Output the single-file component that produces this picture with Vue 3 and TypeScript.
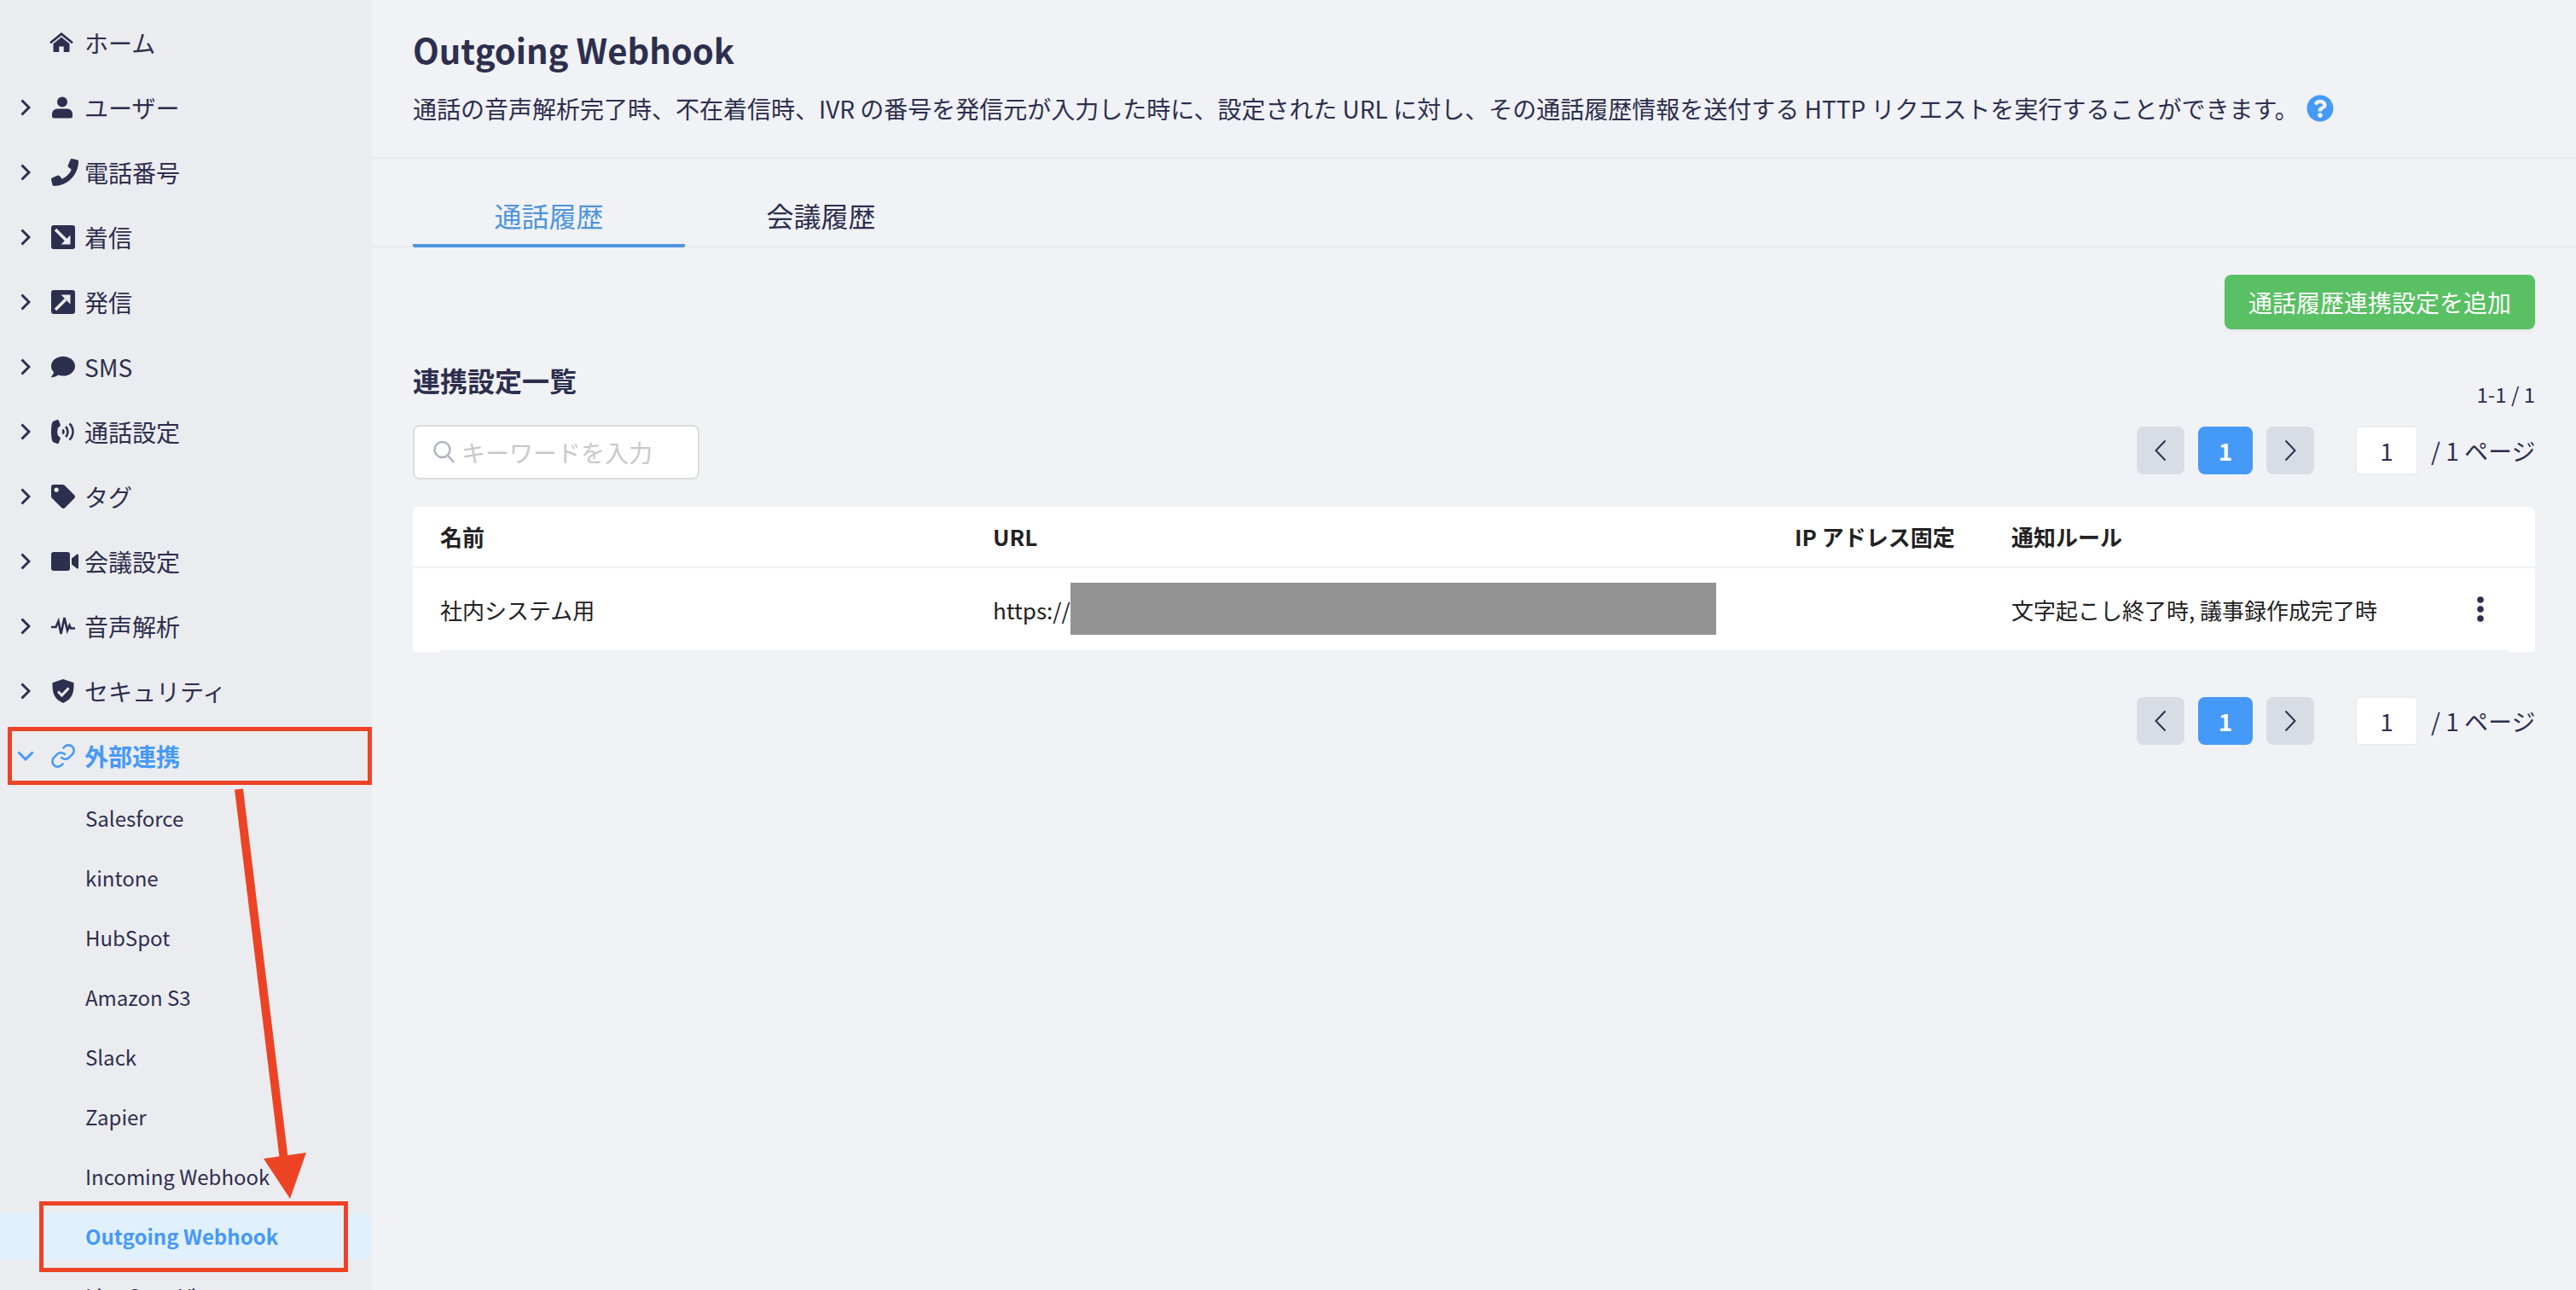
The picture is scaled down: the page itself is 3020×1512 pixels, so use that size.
<script setup lang="ts">
interface NavItem { label: string; icon: string; chevron?: boolean }
const navItems: NavItem[] = [
  { label: 'ホーム', icon: 'home' },
  { label: 'ユーザー', icon: 'user', chevron: true },
  { label: '電話番号', icon: 'phone', chevron: true },
  { label: '着信', icon: 'in', chevron: true },
  { label: '発信', icon: 'out', chevron: true },
  { label: 'SMS', icon: 'sms', chevron: true },
  { label: '通話設定', icon: 'call', chevron: true },
  { label: 'タグ', icon: 'tag', chevron: true },
  { label: '会議設定', icon: 'video', chevron: true },
  { label: '音声解析', icon: 'wave', chevron: true },
  { label: 'セキュリティ', icon: 'shield', chevron: true },
]
const subItems = ['Salesforce', 'kintone', 'HubSpot', 'Amazon S3', 'Slack', 'Zapier', 'Incoming Webhook']
</script>

<template>
  <div class="page">
    <aside class="side">
      <div v-for="item in navItems" :key="item.label" class="nav">
        <svg v-if="item.chevron" class="chev" viewBox="0 0 12 20"><path d="M1.500 1.500 10 10l-8.500 8.500" /></svg>
        <span v-else class="chev" />
        <span class="ico">
          <svg v-if="item.icon === 'home'" viewBox="0 0 28 24" class="i28 shift"><path d="M14 0 .2 11.200l1.700 2.100L14 3.400l12.100 9.900 1.700-2.100Z" /><path d="M14 5.600 4.500 13.300V22a1 1 0 0 0 1 1h5.800v-6.500h5.400V23h5.800a1 1 0 0 0 1-1v-8.700Z" /></svg>
          <svg v-else-if="item.icon === 'user'" viewBox="0 0 24 26" class="i24"><circle cx="12" cy="6.500" r="6" /><path d="M6 14.500h12a6 6 0 0 1 6 6V23a2.500 2.500 0 0 1-2.500 2.500h-19A2.500 2.500 0 0 1 0 23v-2.500a6 6 0 0 1 6-6Z" /></svg>
          <svg v-else-if="item.icon === 'phone'" viewBox="0 0 512 512" class="i32"><path d="M493.400 24.600l-104-24c-11.300-2.600-22.900 3.300-27.500 13.900l-48 112c-4.200 9.800-1.400 21.300 6.900 28l60.600 49.600c-36 76.700-98.900 140.500-177.200 177.200l-49.600-60.600c-6.800-8.300-18.200-11.100-28-6.900l-112 48C3.900 366.500-2 378.100.6 389.400l24 104C27.100 504.200 36.700 512 48 512c256.100 0 464-207.500 464-464 0-11.200-7.700-20.900-18.600-23.400z" /></svg>
          <svg v-else-if="item.icon === 'in'" viewBox="0 0 28 28" class="i28"><rect width="28" height="28" rx="3" /><path class="cut" d="M5 5 18 18" /><path class="cutfill" d="M22.500 11.500V22.500H11.500Z" /></svg>
          <svg v-else-if="item.icon === 'out'" viewBox="0 0 28 28" class="i28"><rect width="28" height="28" rx="3" /><path class="cut" d="M5 23 17 11" /><path class="cutfill" d="M11.500 5.500H22.500V16.500Z" /></svg>
          <svg v-else-if="item.icon === 'sms'" viewBox="0 0 512 512" class="i28"><path d="M256 32C114.600 32 0 125.100 0 240c0 49.600 21.400 95 57 130.700C44.500 421.100 2.700 466 2.200 466.500c-2.200 2.300-2.800 5.700-1.500 8.700S4.800 480 8 480c66.300 0 116-31.800 140.600-51.400 32.700 12.300 69 19.400 107.400 19.400 141.400 0 256-93.100 256-208S397.400 32 256 32z" /></svg>
          <svg v-else-if="item.icon === 'call'" viewBox="0 0 28 28" class="i28"><path d="M7 0 2.500 1.800C1 2.500 0 7 0 14s1 11.500 2.500 12.200L7 28c.8.200 1.500 0 1.800-.8l2-5c.2-.6 0-1.200-.5-1.600L8 18.500c-1-3-1-6 0-9l2.300-2.100c.5-.4.700-1 .5-1.600l-2-5C8.500 0 7.800-.2 7 0Z" /><g class="wave"><path d="M13.500 11.500a4 4 0 0 1 0 5" /><path d="M17 8a8.500 8.500 0 0 1 0 12" /><path d="M21.500 4.500a13.500 13.500 0 0 1 4 9.500 13.500 13.500 0 0 1-4 9.500" /></g></svg>
          <svg v-else-if="item.icon === 'tag'" viewBox="0 0 512 512" class="i28"><path d="M0 252.118V48C0 21.490 21.490 0 48 0h204.118a48 48 0 0 1 33.941 14.059l211.882 211.882c18.745 18.745 18.745 49.137 0 67.882L293.823 497.941c-18.745 18.745-49.137 18.745-67.882 0L14.059 286.059A48 48 0 0 1 0 252.118zM112 64c-26.510 0-48 21.490-48 48s21.490 48 48 48 48-21.490 48-48-21.490-48-48-48z" fill-rule="evenodd" /></svg>
          <svg v-else-if="item.icon === 'video'" viewBox="0 0 32 22" class="i32w"><rect width="22" height="22" rx="3" /><path d="M24 7.500 30 2.800c.8-.6 2-.1 2 1v14.400c0 1.100-1.200 1.600-2 1L24 14.500Z" /></svg>
          <svg v-else-if="item.icon === 'wave'" viewBox="0 0 28 24" class="i28 line"><path d="M0 13h5.500l3-7 3 15L15.500 2l3.500 15 2.500-6 1.500 3.500h5" /></svg>
          <svg v-else viewBox="0 0 28 28" class="i28"><path d="M14 0 1.500 4.300C1.300 16 3 23.500 14 28 25 23.500 26.700 16 26.500 4.300Z" /><path class="cut thin" d="m8 14.500 4.500 4.500 8-8.500" /></svg>
        </span>
        <span class="label">{{ item.label }}</span>
      </div>

      <div class="nav open">
        <svg class="chev-open" viewBox="0 0 20 12"><path d="M1.500 1.500 10 10l8.500-8.500" /></svg>
        <span class="ico">
          <svg viewBox="1 1 22 22" class="i28 link"><path d="M10 13a5 5 0 0 0 7.540.54l3-3a5 5 0 0 0-7.070-7.070l-1.720 1.710" /><path d="M14 11a5 5 0 0 0-7.540-.54l-3 3a5 5 0 0 0 7.070 7.070l1.710-1.710" /></svg>
        </span>
        <span class="label">外部連携</span>
      </div>

      <div class="subs">
        <div v-for="s in subItems" :key="s" class="sub">{{ s }}</div>
        <div class="sub active">Outgoing Webhook</div>
        <div class="sub">Live Sync Viewer</div>
      </div>
    </aside>

    <main class="main">
      <header class="head">
        <h1>Outgoing Webhook</h1>
        <p class="desc">
          <span>通話の音声解析完了時、不在着信時、IVR の番号を発信元が入力した時に、設定された URL に対し、その通話履歴情報を送付する HTTP リクエストを実行することができます。</span>
          <svg class="help" viewBox="0 0 512 512"><path d="M504 256c0 136.997-111.043 248-248 248S8 392.997 8 256C8 119.083 119.043 8 256 8s248 111.083 248 248zM262.655 90c-54.497 0-89.255 22.957-116.549 63.758-3.536 5.286-2.353 12.415 2.715 16.258l34.699 26.310c5.205 3.947 12.621 3.008 16.665-2.122 17.864-22.658 30.113-35.797 57.303-35.797 20.429 0 45.698 13.148 45.698 32.958 0 14.976-12.363 22.667-32.534 33.976C247.128 238.528 216 254.941 216 296v4c0 6.627 5.373 12 12 12h56c6.627 0 12-5.373 12-12v-1.333c0-28.462 83.186-29.647 83.186-106.667 0-58.002-60.165-102-116.531-102zM256 338c-25.365 0-46 20.635-46 46 0 25.364 20.635 46 46 46s46-20.636 46-46c0-25.365-20.635-46-46-46z" /></svg>
        </p>
      </header>

      <nav class="tabs">
        <div class="tab on">通話履歴</div>
        <div class="tab">会議履歴</div>
      </nav>

      <section class="body">
        <div class="actions"><button class="add">通話履歴連携設定を追加</button></div>

        <div class="tools">
          <div class="tools-left">
            <h2>連携設定一覧</h2>
            <div class="search">
              <svg viewBox="0 0 26 28"><circle cx="10.500" cy="11" r="9" /><path d="m17 18 7 8" /></svg>
              <span>キーワードを入力</span>
            </div>
          </div>
          <div class="tools-right">
            <div class="count">1-1 / 1</div>
            <div class="pager">
              <span class="pg"><svg viewBox="0 0 14 26"><path d="M12.500 1.500 1.500 13l11 11.500" /></svg></span>
              <span class="pg cur">1</span>
              <span class="pg"><svg viewBox="0 0 14 26"><path d="m1.500 1.500 11 11.500-11 11.500" /></svg></span>
              <span class="num">1</span>
              <span class="of">/ 1 ページ</span>
            </div>
          </div>
        </div>

        <div class="table">
          <div class="row hdr">
            <div class="c1">名前</div><div class="c2">URL</div><div class="c3">IP アドレス固定</div><div class="c4">通知ルール</div><div class="c5" />
          </div>
          <div class="row dat">
            <div class="c1">社内システム用</div>
            <div class="c2 url"><span>https://</span><span class="mask" /></div>
            <div class="c3" />
            <div class="c4">文字起こし終了時, 議事録作成完了時</div>
            <div class="c5"><svg class="kebab" viewBox="0 0 8 30"><circle cx="4" cy="4" r="3.800" /><circle cx="4" cy="15" r="3.800" /><circle cx="4" cy="26" r="3.800" /></svg></div>
          </div>
        </div>

        <div class="pager bottom">
          <span class="pg"><svg viewBox="0 0 14 26"><path d="M12.500 1.500 1.500 13l11 11.500" /></svg></span>
          <span class="pg cur">1</span>
          <span class="pg"><svg viewBox="0 0 14 26"><path d="m1.500 1.500 11 11.500-11 11.500" /></svg></span>
          <span class="num">1</span>
          <span class="of">/ 1 ページ</span>
        </div>
      </section>
    </main>

    <div class="mark m1" />
    <div class="mark m2" />
    <svg class="arrow" viewBox="0 0 3020 1512">
      <path d="M280 925 333 1360" />
      <polygon points="309,1358 359,1351 340,1405" />
    </svg>
  </div>
</template>

<style scoped>
.page {
  position: relative;
  display: flex;
  width: 3020px;
  height: 1512px;
  overflow: hidden;
  background: #f0f2f6;
  color: #2d2f4e;
  font-family: "Noto Sans CJK JP", "Noto Sans", sans-serif;
  font-size: 28px;
}
.side {
  width: 436px;
  flex: none;
  box-sizing: border-box;
  padding-top: 12px;
  height: 1512px;
  overflow: hidden;
  background: #ebecf0;
}
.nav {
  height: 76px;
  display: flex;
  align-items: center;
  line-height: 40px;
}
.chev {
  width: 12px;
  height: 20px;
  margin-left: 24px;
  flex: none;
  fill: none;
  stroke: #2d2f4e;
  stroke-width: 3px;
}
.chev-open {
  width: 20px;
  height: 12px;
  margin-left: 20px;
  margin-right: -4px;
  flex: none;
  fill: none;
  stroke: #4599f7;
  stroke-width: 3px;
}
.ico {
  width: 39px;
  margin-left: 24px;
  flex: none;
  display: flex;
  align-items: center;
}
.ico svg { display: block; flex: none; fill: #2d2f4e; }
.i24 { width: 24px; height: 26px; margin-left: 1px; }
.i28 { width: 28px; height: 28px; }
.i32 { width: 32px; height: 32px; }
.i32w { width: 32px; height: 22px; }
.shift { margin-left: -2px; }
.ico .line { fill: none; stroke: #2d2f4e; stroke-width: 2.600px; }
.ico .link { fill: none; stroke: #4599f7; stroke-width: 2px; }
.cut { fill: none; stroke: #ebecf0; stroke-width: 3.500px; }
.thin { stroke-width: 3px; }
.cutfill { fill: #ebecf0; }
.wave { fill: none; stroke: #2d2f4e; stroke-width: 2.500px; }
.open { color: #4599f7; font-weight: 700; }
.subs {
  display: flex;
  flex-direction: column;
  padding-top: 8px;
}
.sub {
  height: 54px;
  line-height: 54px;
  margin-bottom: 16px;
  padding-left: 100px;
  font-size: 24px;
}
.sub.active {
  background: #e1f0fd;
  color: #4599f7;
  font-weight: 700;
  border-radius: 0 12px 12px 0;
}
.main { flex: 1; min-width: 0; }
.head {
  box-sizing: border-box;
  padding: 32px 48px 0;
  border-bottom: 2px solid #e9eaee;
  height: 186px;
}
h1 {
  margin: 0;
  font-size: 40px;
  line-height: 52px;
  font-weight: 700;
}
.desc {
  margin: 23px 0 0;
  display: flex;
  align-items: center;
  font-size: 28px;
  line-height: 40px;
}
.help { width: 32px; height: 32px; margin-left: 9px; fill: #4599f7; flex: none; }
.tabs {
  height: 104px;
  box-sizing: border-box;
  padding: 0 48px;
  display: flex;
  border-bottom: 2px solid #e9eaee;
}
.tab {
  width: 319px;
  height: 102px;
  padding-top: 43px;
  box-sizing: border-box;
  text-align: center;
  font-size: 32px;
  line-height: 46px;
}
.tab.on {
  color: #4f94dc;
  border-bottom: 4px solid #4f94dc;
  height: 104px;
  border-radius: 0 0 2px 2px;
}
.body { padding: 32px 48px 0; }
.actions { display: flex; justify-content: flex-end; }
.add {
  width: 364px;
  height: 64px;
  padding: 0;
  border: 0;
  border-radius: 8px;
  background: #5ac064;
  color: #fff;
  font: inherit;
  font-size: 28px;
  box-shadow: 0 2px 4px rgba(0, 0, 0, 0.05);
}
.tools {
  display: flex;
  justify-content: space-between;
  margin-top: 36px;
  height: 174px;
}
h2 {
  margin: 0;
  font-size: 32px;
  line-height: 46px;
  font-weight: 700;
}
.search {
  margin-top: 30px;
  width: 336px;
  height: 64px;
  box-sizing: border-box;
  background: #fff;
  border: 2px solid #dcdcdc;
  border-radius: 8px;
  display: flex;
  align-items: center;
  padding-left: 22px;
  color: #c8c8c8;
  font-size: 28px;
}
.search svg {
  width: 26px;
  height: 28px;
  margin-right: 7px;
  fill: none;
  stroke: #aeb6c2;
  stroke-width: 2.500px;
}
.tools-right { display: flex; flex-direction: column; align-items: flex-end; }
.count { font-size: 24px; line-height: 34px; margin-top: 23px; }
.pager {
  display: flex;
  align-items: center;
  justify-content: flex-end;
  height: 58px;
  margin-top: 20px;
}
.pager.bottom { margin-top: 52px; }
.pg {
  width: 56px;
  height: 56px;
  border-radius: 8px;
  background: #d8dde5;
  display: flex;
  align-items: center;
  justify-content: center;
  margin-right: 16px;
}
.pg svg { width: 14px; height: 26px; fill: none; stroke: #2d2f4e; stroke-width: 2px; }
.pg.cur {
  width: 64px;
  background: #4599f7;
  color: #fff;
  font-weight: 700;
  font-size: 28px;
}
.num {
  width: 74px;
  height: 58px;
  box-sizing: border-box;
  margin-left: 32px;
  background: #fff;
  border: 2px solid #ebecef;
  border-radius: 6px;
  display: flex;
  align-items: center;
  justify-content: center;
}
.of { margin-left: 15px; width: 122px; white-space: nowrap; }
.table {
  background: #fff;
  border-radius: 8px 8px 0 0;
  color: #222;
  font-size: 26px;
  margin-top: -2px;
}
.row { display: flex; align-items: center; padding-left: 32px; }
.hdr {
  height: 72px;
  box-sizing: border-box;
  padding-bottom: 2px;
  font-weight: 700;
  border-bottom: 2px solid #f0f2f6;
}
.dat {
  position: relative;
  height: 98px;
  box-sizing: border-box;
  padding-bottom: 2px;
}
.dat::after {
  content: "";
  position: absolute;
  left: 32px;
  right: 32px;
  bottom: 0;
  height: 2px;
  background: #f0f2f6;
}
.c1 { width: 648px; flex: none; }
.c2 { width: 940px; flex: none; }
.c3 { width: 254px; flex: none; }
.c4 { width: 546px; flex: none; white-space: nowrap; }
.c5 { flex: 1; }
.url { display: flex; align-items: center; }
.mask {
  width: 757px;
  height: 61px;
  margin-bottom: 2px;
  background: #939393;
  display: block;
}
.kebab { display: block; width: 8px; height: 30px; fill: #2d2f4e; }
.mark {
  position: absolute;
  box-sizing: border-box;
  border: 5px solid #ec4325;
}
.m1 { left: 9px; top: 852px; width: 427px; height: 68px; }
.m2 { left: 46px; top: 1408px; width: 362px; height: 83px; }
.arrow {
  position: absolute;
  left: 0;
  top: 0;
  width: 3020px;
  height: 1512px;
  pointer-events: none;
}
.arrow path { fill: none; stroke: #ec4325; stroke-width: 10px; }
.arrow polygon { fill: #ec4325; }
</style>

<style>
html, body { margin: 0; padding: 0; }
</style>
